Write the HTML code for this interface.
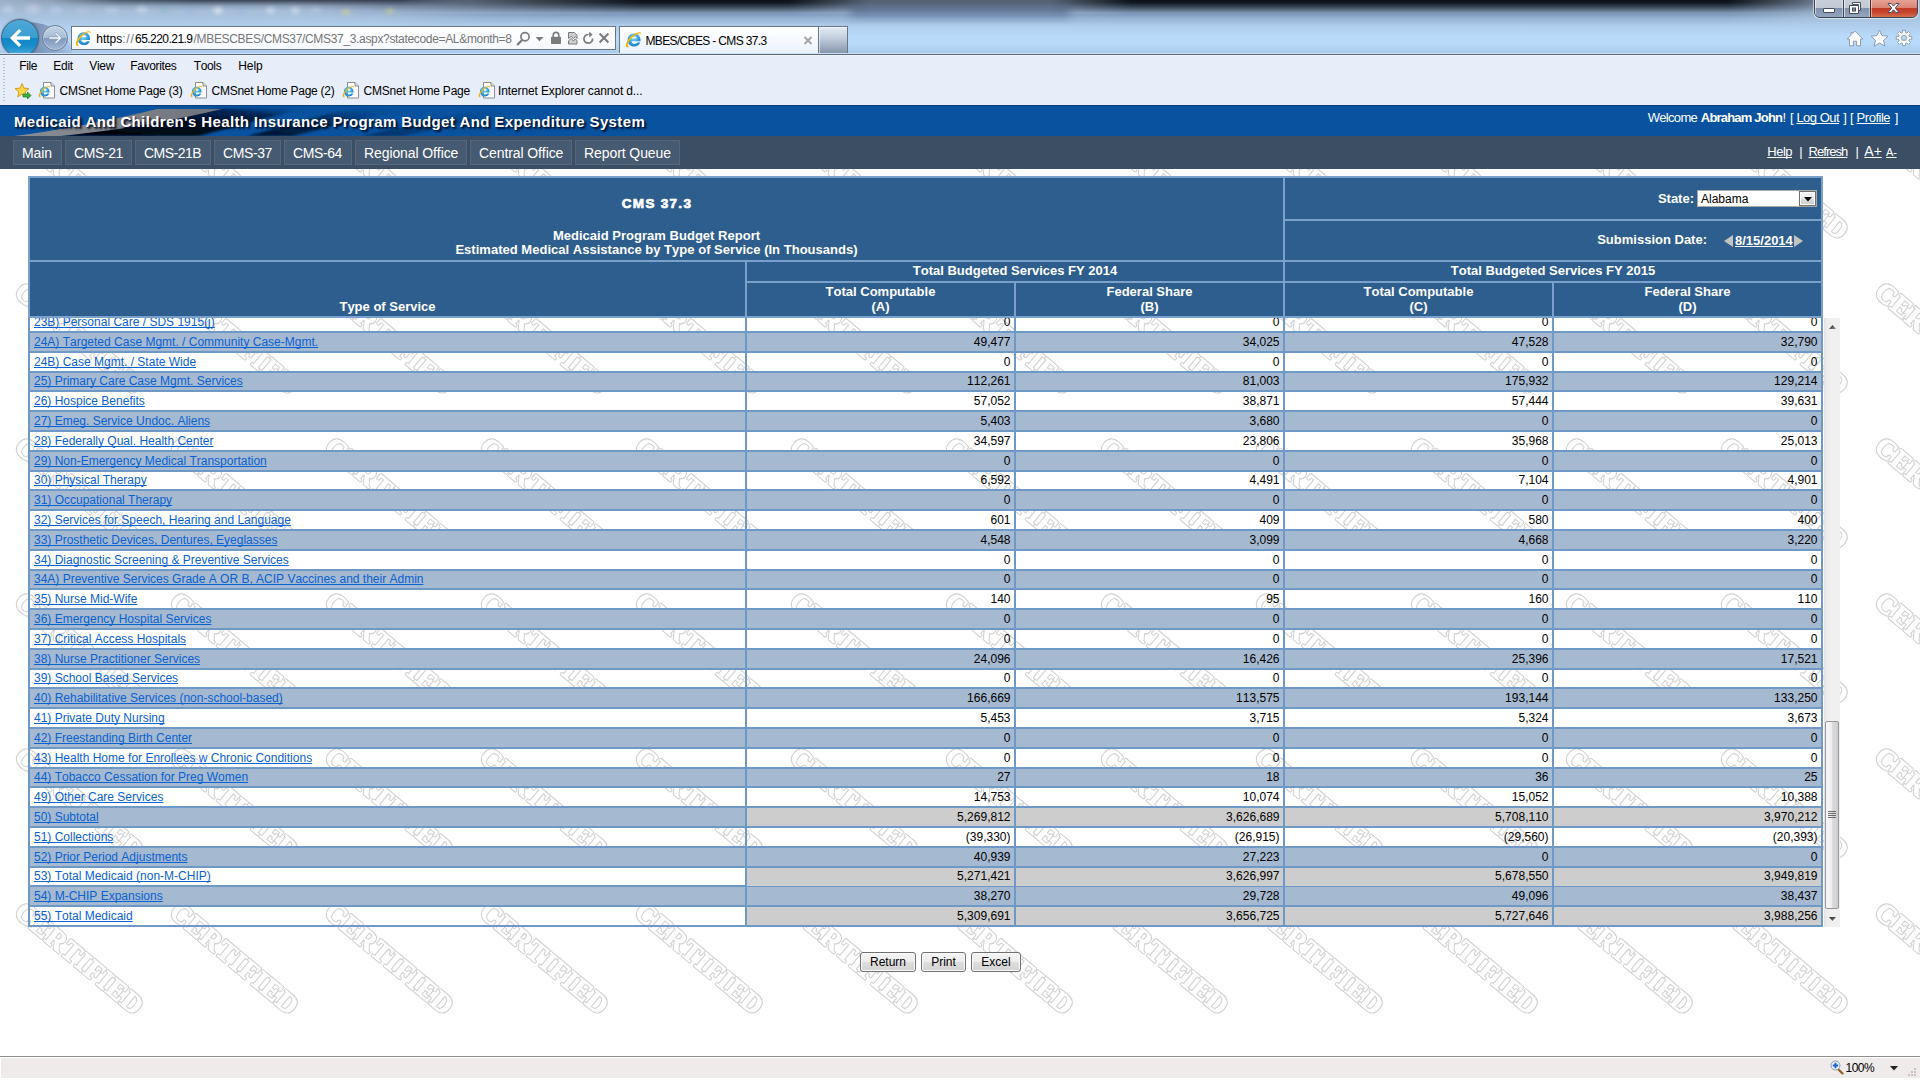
<!DOCTYPE html>
<html><head><meta charset="utf-8"><title>MBES/CBES - CMS 37.3</title>
<style>
*{box-sizing:border-box}
html,body{margin:0;padding:0;width:1920px;height:1080px;overflow:hidden;background:#fff}
body{font-family:"Liberation Sans",sans-serif;font-size:12px;color:#000;position:relative;font-kerning:none}
.abs{position:absolute}
a{text-decoration:underline}
*{text-decoration-skip-ink:none}
svg{display:block}
/* ---------- page ---------- */
#page{position:absolute;left:0;top:0;width:1920px;height:1056px;overflow:hidden;background:#fff}
#wm{position:absolute;left:0;top:105px;width:1920px;height:951px;overflow:hidden}
#hdr{position:absolute;left:0;top:105px;width:1920px;height:31px;background:#08529f;overflow:hidden}
#nav{position:absolute;left:0;top:136px;width:1920px;height:33px;background:#3b4e64}
.nb{position:absolute;top:140px;height:25px;background:#465a71;border:1px solid #53677e}
.hb{position:absolute;background:#2e5e8e}
.bd{position:absolute;background:#79a1cb}
.bd2{position:absolute;background:#6e98c6}
.th{position:absolute;color:#fff;font-weight:bold;font-size:13px;line-height:15px;text-align:center;white-space:nowrap}
#rows{position:absolute;left:30px;top:318px;width:1791px;height:609px;overflow:hidden}
.r{position:absolute;left:0;width:1791px;height:19.8px;border-bottom:2px solid #6e98c6;font-size:12px;line-height:17.5px;white-space:nowrap}
.r.alt{background:#a5b9d0}
.r>div{position:absolute;top:0;height:18px}
.t{position:absolute;left:0;width:1791px;height:18px;font-size:12px;line-height:18px;white-space:nowrap}
.t>div{position:absolute;top:0;height:18px;text-align:right;padding-right:3.5px}
.t .c0{left:0;width:715px;text-align:left;padding-left:4px}
.r .c1,.t .c1{left:717px;width:267px}
.r .c2,.t .c2{left:986px;width:267px}
.r .c3,.t .c3{left:1255px;width:267px}
.r .c4,.t .c4{left:1524px;width:267px}
.r.tot .c1,.r.tot .c2,.r.tot .c3,.r.tot .c4{background:#cdcdcd}
.t a{color:#0a62d0}
.btn{position:absolute;top:952px;height:20px;border:1px solid #707070;border-radius:3px;background:linear-gradient(180deg,#f4f4f4 0,#ececec 48%,#dedede 52%,#d2d2d2 100%);box-shadow:inset 0 0 0 1px #fbfbfb;font-size:12px;line-height:18px;text-align:center;color:#000}
/* ---------- glass / chrome ---------- */
#glass{position:absolute;left:0;top:0;width:1920px;height:53px;overflow:hidden;
 background:linear-gradient(180deg,#9eb1c8 0,#a3b9d3 8px,#a8c2de 16px,#b0cdec 26px,#b9dafa 37px,#b8d8f8 44px,#b0d0f0 50px,#a9c9e9 53px);}
#glass .dk{position:absolute;left:0;top:0;width:1920px;height:28px;
 background:linear-gradient(180deg,rgba(13,17,25,1) 0,rgba(15,21,31,.96) 3px,rgba(28,40,58,.7) 8px,rgba(55,78,108,.34) 13px,rgba(80,110,150,.1) 18px,rgba(80,110,150,0) 24px);
 -webkit-mask-image:linear-gradient(90deg,transparent 0,transparent 300px,rgba(0,0,0,.3) 400px,rgba(0,0,0,.72) 540px,#000 640px,#000 790px,rgba(0,0,0,.5) 870px,rgba(0,0,0,.5) 1050px,#000 1130px,#000 1730px,rgba(0,0,0,.5) 1800px,transparent 1850px);
 mask-image:linear-gradient(90deg,transparent 0,transparent 300px,rgba(0,0,0,.3) 400px,rgba(0,0,0,.72) 540px,#000 640px,#000 790px,rgba(0,0,0,.5) 870px,rgba(0,0,0,.5) 1050px,#000 1130px,#000 1730px,rgba(0,0,0,.5) 1800px,transparent 1850px);}
#sep1{position:absolute;left:0;top:53px;width:1920px;height:3px;background:linear-gradient(180deg,#cfe3f8 0,#cfe3f8 33.3%,#5b687b 33.3%,#5b687b 66.6%,#f0f5fc 66.6%)}
#menubar{position:absolute;left:0;top:56px;width:1920px;height:49px;background:#e7edf9}
</style></head>
<body>
<div id="page">
<div id="wm">
<svg width="1920" height="951" viewBox="0 0 1920 951"><defs><pattern id="wmp" x="0" y="0" width="155" height="155" patternUnits="userSpaceOnUse"><g transform="translate(13,34.500) rotate(40)"><text x="0" y="0" font-family="Liberation Serif" font-weight="bold" font-size="27.5" textLength="158" lengthAdjust="spacing" fill="#d1d1d1" stroke="#d1d1d1" stroke-width="3.000" stroke-linejoin="round">CERTIFIED</text><text x="0" y="0" font-family="Liberation Serif" font-weight="bold" font-size="27.5" textLength="158" lengthAdjust="spacing" fill="#fff" stroke="#fff" stroke-width="0.800" stroke-linejoin="round">CERTIFIED</text></g></pattern></defs><rect width="1920" height="951" fill="url(#wmp)"/></svg>
</div>
<div id="hdr"><svg width="1920" height="31" viewBox="0 0 1920 31"><defs><linearGradient id="hg1" x1="0" y1="0" x2="1" y2="0"><stop offset="0" stop-color="#8a8d93"/><stop offset=".55" stop-color="#7d8087"/><stop offset="1" stop-color="#6d727b"/></linearGradient><linearGradient id="hg2" x1="0" y1="1" x2="1" y2="0"><stop offset="0" stop-color="#010306"/><stop offset=".5" stop-color="#020c1f"/><stop offset=".8" stop-color="#04224f" stop-opacity=".9"/><stop offset="1" stop-color="#08529f" stop-opacity=".1"/></linearGradient><linearGradient id="hg3" x1="0" y1="1" x2="1" y2="0"><stop offset="0" stop-color="#020d22" stop-opacity=".95"/><stop offset=".6" stop-color="#052452" stop-opacity=".7"/><stop offset="1" stop-color="#08529f" stop-opacity="0"/></linearGradient><filter id="hb" x="-5%" y="-50%" width="110%" height="200%"><feGaussianBlur stdDeviation="1.2"/></filter></defs><rect width="1920" height="1" fill="#0b3c74"/><path d="M56 31 L222 3.500 L305 3 L198 31 Z" fill="url(#hg2)" filter="url(#hb)"/><path d="M248 31 L332 8 L368 3.500 L404 4.500 L292 31 Z" fill="url(#hg3)" filter="url(#hb)"/><path d="M362 31 L472 6 L522 6 L402 31 Z" fill="url(#hg3)" opacity=".45" filter="url(#hb)"/><path d="M14 31 C70 24 120 13 157 4 L222 4 C180 14 130 24 60 31z" fill="url(#hg1)"/></svg></div>
<div style="position:absolute;left:14px;top:113px;font-size:15px;line-height:17px;white-space:pre;color:#fff;font-weight:bold;letter-spacing:0.362px;text-shadow:2px 2px 2px rgba(0,10,35,.85),1px 1px 1px rgba(0,10,35,.6);">Medicaid And Children's Health Insurance Program Budget And Expenditure System</div>
<div style="position:absolute;left:1647.7px;top:110px;font-size:13px;line-height:15px;white-space:pre;color:#fff;letter-spacing:-0.678px;">Welcome</div>
<div style="position:absolute;left:1700.8px;top:110px;font-size:13px;line-height:15px;white-space:pre;color:#fff;font-weight:bold;letter-spacing:-0.801px;">Abraham John</div>
<div style="position:absolute;left:1782.6px;top:110px;font-size:13px;line-height:15px;white-space:pre;color:#fff;">!</div>
<div style="position:absolute;left:1789.9px;top:110px;font-size:13px;line-height:15px;white-space:pre;color:#fff;">[</div>
<div style="position:absolute;left:1796.4px;top:110px;font-size:13px;line-height:15px;white-space:pre;color:#fff;letter-spacing:-0.508px;text-decoration:underline;">Log Out</div>
<div style="position:absolute;left:1843.3px;top:110px;font-size:13px;line-height:15px;white-space:pre;color:#fff;">]</div>
<div style="position:absolute;left:1850px;top:110px;font-size:13px;line-height:15px;white-space:pre;color:#fff;">[</div>
<div style="position:absolute;left:1856.6px;top:110px;font-size:13px;line-height:15px;white-space:pre;color:#fff;letter-spacing:-0.478px;text-decoration:underline;">Profile</div>
<div style="position:absolute;left:1894.7px;top:110px;font-size:13px;line-height:15px;white-space:pre;color:#fff;">]</div>
<div id="nav"></div>
<div class="nb" style="left:13px;width:49px"></div>
<div style="position:absolute;left:22px;top:145px;font-size:14px;line-height:16px;white-space:pre;color:#fff;letter-spacing:-0.086px;">Main</div>
<div class="nb" style="left:65px;width:67px"></div>
<div style="position:absolute;left:74px;top:145px;font-size:14px;line-height:16px;white-space:pre;color:#fff;letter-spacing:-0.391px;">CMS-21</div>
<div class="nb" style="left:135px;width:76px"></div>
<div style="position:absolute;left:144px;top:145px;font-size:14px;line-height:16px;white-space:pre;color:#fff;letter-spacing:-0.526px;">CMS-21B</div>
<div class="nb" style="left:214px;width:67px"></div>
<div style="position:absolute;left:223px;top:145px;font-size:14px;line-height:16px;white-space:pre;color:#fff;letter-spacing:-0.391px;">CMS-37</div>
<div class="nb" style="left:284px;width:68px"></div>
<div style="position:absolute;left:293px;top:145px;font-size:14px;line-height:16px;white-space:pre;color:#fff;letter-spacing:-0.391px;">CMS-64</div>
<div class="nb" style="left:355px;width:112px"></div>
<div style="position:absolute;left:364px;top:145px;font-size:14px;line-height:16px;white-space:pre;color:#fff;letter-spacing:-0.098px;">Regional Office</div>
<div class="nb" style="left:470px;width:102px"></div>
<div style="position:absolute;left:479px;top:145px;font-size:14px;line-height:16px;white-space:pre;color:#fff;letter-spacing:-0.095px;">Central Office</div>
<div class="nb" style="left:575px;width:105px"></div>
<div style="position:absolute;left:584px;top:145px;font-size:14px;line-height:16px;white-space:pre;color:#fff;letter-spacing:-0.079px;">Report Queue</div>
<div style="position:absolute;left:1767.3px;top:144px;font-size:13px;line-height:15px;white-space:pre;color:#fff;letter-spacing:-0.509px;text-decoration:underline;">Help</div>
<div style="position:absolute;left:1799.2px;top:144px;font-size:13px;line-height:15px;white-space:pre;color:#fff;">|</div>
<div style="position:absolute;left:1808.5px;top:144px;font-size:13px;line-height:15px;white-space:pre;color:#fff;letter-spacing:-0.946px;text-decoration:underline;">Refresh</div>
<div style="position:absolute;left:1855.5px;top:144px;font-size:13px;line-height:15px;white-space:pre;color:#fff;">|</div>
<div style="position:absolute;left:1864.3px;top:143px;font-size:14px;line-height:16px;white-space:pre;color:#fff;letter-spacing:-0.007px;text-decoration:underline;">A+</div>
<div style="position:absolute;left:1886.1px;top:146px;font-size:11px;line-height:12px;white-space:pre;color:#fff;letter-spacing:-0.250px;text-decoration:underline;">A-</div>
<div class="bd" style="left:28px;top:176px;width:1795px;height:142px"></div>
<div class="bd2" style="left:28px;top:318px;width:2px;height:609px"></div>
<div class="bd2" style="left:1821px;top:318px;width:2px;height:609px"></div>
<div class="hb" style="left:30px;top:178px;width:1253px;height:82px"></div>
<div class="hb" style="left:1285px;top:178px;width:536px;height:41px"></div>
<div class="hb" style="left:1285px;top:221px;width:536px;height:39px"></div>
<div class="hb" style="left:30px;top:262px;width:715px;height:54px"></div>
<div class="hb" style="left:747px;top:262px;width:536px;height:19px"></div>
<div class="hb" style="left:1285px;top:262px;width:536px;height:19px"></div>
<div class="hb" style="left:747px;top:283px;width:267px;height:33px"></div>
<div class="hb" style="left:1016px;top:283px;width:267px;height:33px"></div>
<div class="hb" style="left:1285px;top:283px;width:267px;height:33px"></div>
<div class="hb" style="left:1554px;top:283px;width:267px;height:33px"></div>
<div class="th" style="left:30px;width:1253px;top:196px;font-size:13.5px;letter-spacing:1.3px;padding-left:1px;-webkit-text-stroke:.7px #fff;">CMS 37.3</div>
<div class="th" style="left:30px;width:1253px;top:229px;line-height:14px;letter-spacing:.02px">Medicaid Program Budget Report<br>Estimated Medical Assistance by Type of Service (In Thousands)</div>
<div class="th" style="left:30px;width:715px;top:299px;">Type of Service</div>
<div class="th" style="left:747px;width:536px;top:263px;">Total Budgeted Services FY 2014</div>
<div class="th" style="left:1285px;width:536px;top:263px;">Total Budgeted Services FY 2015</div>
<div class="th" style="left:747px;width:267px;top:284px;">Total Computable<br>(A)</div>
<div class="th" style="left:1016px;width:267px;top:284px;">Federal Share<br>(B)</div>
<div class="th" style="left:1285px;width:267px;top:284px;">Total Computable<br>(C)</div>
<div class="th" style="left:1554px;width:267px;top:284px;">Federal Share<br>(D)</div>
<div class="th" style="left:1600px;width:94px;top:191px;text-align:right">State:</div>
<div class="abs" style="left:1697px;top:190px;width:120px;height:17px;background:#fff;border:1px solid #a9a9a9;font-size:12px;line-height:16px;padding-left:3px">Alabama<div class="abs" style="right:0;top:0;width:17px;height:15px;border:1px solid #707070;background:#fff"><div class="abs" style="left:1px;top:1px;width:13px;height:11px;background:linear-gradient(180deg,#f2f2f2 0,#ebebeb 50%,#dddddd 50%,#cfcfcf 100%)"></div><svg class="abs" style="left:4px;top:4.500px" width="8" height="5" viewBox="0 0 8 5"><path d="M0 0h8L4 4.500z" fill="#000"/></svg></div></div>
<div class="th" style="left:1500px;width:207px;top:232px;text-align:right">Submission Date:</div>
<svg class="abs" style="left:1724px;top:235px" width="9" height="12" viewBox="0 0 9 12"><path d="M9 0v12L0 6z" fill="#c3c3c3"/></svg>
<div class="th" style="left:1735px;top:233px;text-align:left;text-decoration:underline">8/15/2014</div>
<svg class="abs" style="left:1794px;top:235px" width="9" height="12" viewBox="0 0 9 12"><path d="M0 0v12L9 6z" fill="#c3c3c3"/></svg>
<div id="rows">
<div class="r" style="top:-4.80px"><div class="c1"></div><div class="c2"></div><div class="c3"></div><div class="c4"></div></div>
<div class="t" style="top:-5px"><div class="c0"><a>23B) Personal Care / SDS 1915(j)</a></div><div class="c1">0</div><div class="c2">0</div><div class="c3">0</div><div class="c4">0</div></div>
<div class="r alt" style="top:15.00px"><div class="c1"></div><div class="c2"></div><div class="c3"></div><div class="c4"></div></div>
<div class="t" style="top:15px"><div class="c0"><a>24A) Targeted Case Mgmt. / Community Case-Mgmt.</a></div><div class="c1">49,477</div><div class="c2">34,025</div><div class="c3">47,528</div><div class="c4">32,790</div></div>
<div class="r" style="top:34.80px"><div class="c1"></div><div class="c2"></div><div class="c3"></div><div class="c4"></div></div>
<div class="t" style="top:35px"><div class="c0"><a>24B) Case Mgmt. / State Wide</a></div><div class="c1">0</div><div class="c2">0</div><div class="c3">0</div><div class="c4">0</div></div>
<div class="r alt" style="top:54.60px"><div class="c1"></div><div class="c2"></div><div class="c3"></div><div class="c4"></div></div>
<div class="t" style="top:54px"><div class="c0"><a>25) Primary Care Case Mgmt. Services</a></div><div class="c1">112,261</div><div class="c2">81,003</div><div class="c3">175,932</div><div class="c4">129,214</div></div>
<div class="r" style="top:74.40px"><div class="c1"></div><div class="c2"></div><div class="c3"></div><div class="c4"></div></div>
<div class="t" style="top:74px"><div class="c0"><a>26) Hospice Benefits</a></div><div class="c1">57,052</div><div class="c2">38,871</div><div class="c3">57,444</div><div class="c4">39,631</div></div>
<div class="r alt" style="top:94.20px"><div class="c1"></div><div class="c2"></div><div class="c3"></div><div class="c4"></div></div>
<div class="t" style="top:94px"><div class="c0"><a>27) Emeg. Service Undoc. Aliens</a></div><div class="c1">5,403</div><div class="c2">3,680</div><div class="c3">0</div><div class="c4">0</div></div>
<div class="r" style="top:114.00px"><div class="c1"></div><div class="c2"></div><div class="c3"></div><div class="c4"></div></div>
<div class="t" style="top:114px"><div class="c0"><a>28) Federally Qual. Health Center</a></div><div class="c1">34,597</div><div class="c2">23,806</div><div class="c3">35,968</div><div class="c4">25,013</div></div>
<div class="r alt" style="top:133.80px"><div class="c1"></div><div class="c2"></div><div class="c3"></div><div class="c4"></div></div>
<div class="t" style="top:134px"><div class="c0"><a>29) Non-Emergency Medical Transportation</a></div><div class="c1">0</div><div class="c2">0</div><div class="c3">0</div><div class="c4">0</div></div>
<div class="r" style="top:153.60px"><div class="c1"></div><div class="c2"></div><div class="c3"></div><div class="c4"></div></div>
<div class="t" style="top:153px"><div class="c0"><a>30) Physical Therapy</a></div><div class="c1">6,592</div><div class="c2">4,491</div><div class="c3">7,104</div><div class="c4">4,901</div></div>
<div class="r alt" style="top:173.40px"><div class="c1"></div><div class="c2"></div><div class="c3"></div><div class="c4"></div></div>
<div class="t" style="top:173px"><div class="c0"><a>31) Occupational Therapy</a></div><div class="c1">0</div><div class="c2">0</div><div class="c3">0</div><div class="c4">0</div></div>
<div class="r" style="top:193.20px"><div class="c1"></div><div class="c2"></div><div class="c3"></div><div class="c4"></div></div>
<div class="t" style="top:193px"><div class="c0"><a>32) Services for Speech, Hearing and Language</a></div><div class="c1">601</div><div class="c2">409</div><div class="c3">580</div><div class="c4">400</div></div>
<div class="r alt" style="top:213.00px"><div class="c1"></div><div class="c2"></div><div class="c3"></div><div class="c4"></div></div>
<div class="t" style="top:213px"><div class="c0"><a>33) Prosthetic Devices, Dentures, Eyeglasses</a></div><div class="c1">4,548</div><div class="c2">3,099</div><div class="c3">4,668</div><div class="c4">3,220</div></div>
<div class="r" style="top:232.80px"><div class="c1"></div><div class="c2"></div><div class="c3"></div><div class="c4"></div></div>
<div class="t" style="top:233px"><div class="c0"><a>34) Diagnostic Screening &amp; Preventive Services</a></div><div class="c1">0</div><div class="c2">0</div><div class="c3">0</div><div class="c4">0</div></div>
<div class="r alt" style="top:252.60px"><div class="c1"></div><div class="c2"></div><div class="c3"></div><div class="c4"></div></div>
<div class="t" style="top:252px"><div class="c0"><a>34A) Preventive Services Grade A OR B, ACIP Vaccines and their Admin</a></div><div class="c1">0</div><div class="c2">0</div><div class="c3">0</div><div class="c4">0</div></div>
<div class="r" style="top:272.40px"><div class="c1"></div><div class="c2"></div><div class="c3"></div><div class="c4"></div></div>
<div class="t" style="top:272px"><div class="c0"><a>35) Nurse Mid-Wife</a></div><div class="c1">140</div><div class="c2">95</div><div class="c3">160</div><div class="c4">110</div></div>
<div class="r alt" style="top:292.20px"><div class="c1"></div><div class="c2"></div><div class="c3"></div><div class="c4"></div></div>
<div class="t" style="top:292px"><div class="c0"><a>36) Emergency Hospital Services</a></div><div class="c1">0</div><div class="c2">0</div><div class="c3">0</div><div class="c4">0</div></div>
<div class="r" style="top:312.00px"><div class="c1"></div><div class="c2"></div><div class="c3"></div><div class="c4"></div></div>
<div class="t" style="top:312px"><div class="c0"><a>37) Critical Access Hospitals</a></div><div class="c1">0</div><div class="c2">0</div><div class="c3">0</div><div class="c4">0</div></div>
<div class="r alt" style="top:331.80px"><div class="c1"></div><div class="c2"></div><div class="c3"></div><div class="c4"></div></div>
<div class="t" style="top:332px"><div class="c0"><a>38) Nurse Practitioner Services</a></div><div class="c1">24,096</div><div class="c2">16,426</div><div class="c3">25,396</div><div class="c4">17,521</div></div>
<div class="r" style="top:351.60px"><div class="c1"></div><div class="c2"></div><div class="c3"></div><div class="c4"></div></div>
<div class="t" style="top:351px"><div class="c0"><a>39) School Based Services</a></div><div class="c1">0</div><div class="c2">0</div><div class="c3">0</div><div class="c4">0</div></div>
<div class="r alt" style="top:371.40px"><div class="c1"></div><div class="c2"></div><div class="c3"></div><div class="c4"></div></div>
<div class="t" style="top:371px"><div class="c0"><a>40) Rehabilitative Services (non-school-based)</a></div><div class="c1">166,669</div><div class="c2">113,575</div><div class="c3">193,144</div><div class="c4">133,250</div></div>
<div class="r" style="top:391.20px"><div class="c1"></div><div class="c2"></div><div class="c3"></div><div class="c4"></div></div>
<div class="t" style="top:391px"><div class="c0"><a>41) Private Duty Nursing</a></div><div class="c1">5,453</div><div class="c2">3,715</div><div class="c3">5,324</div><div class="c4">3,673</div></div>
<div class="r alt" style="top:411.00px"><div class="c1"></div><div class="c2"></div><div class="c3"></div><div class="c4"></div></div>
<div class="t" style="top:411px"><div class="c0"><a>42) Freestanding Birth Center</a></div><div class="c1">0</div><div class="c2">0</div><div class="c3">0</div><div class="c4">0</div></div>
<div class="r" style="top:430.80px"><div class="c1"></div><div class="c2"></div><div class="c3"></div><div class="c4"></div></div>
<div class="t" style="top:431px"><div class="c0"><a>43) Health Home for Enrollees w Chronic Conditions</a></div><div class="c1">0</div><div class="c2">0</div><div class="c3">0</div><div class="c4">0</div></div>
<div class="r alt" style="top:450.60px"><div class="c1"></div><div class="c2"></div><div class="c3"></div><div class="c4"></div></div>
<div class="t" style="top:450px"><div class="c0"><a>44) Tobacco Cessation for Preg Women</a></div><div class="c1">27</div><div class="c2">18</div><div class="c3">36</div><div class="c4">25</div></div>
<div class="r" style="top:470.40px"><div class="c1"></div><div class="c2"></div><div class="c3"></div><div class="c4"></div></div>
<div class="t" style="top:470px"><div class="c0"><a>49) Other Care Services</a></div><div class="c1">14,753</div><div class="c2">10,074</div><div class="c3">15,052</div><div class="c4">10,388</div></div>
<div class="r alt tot" style="top:490.20px"><div class="c1"></div><div class="c2"></div><div class="c3"></div><div class="c4"></div></div>
<div class="t" style="top:490px"><div class="c0"><a>50) Subtotal</a></div><div class="c1">5,269,812</div><div class="c2">3,626,689</div><div class="c3">5,708,110</div><div class="c4">3,970,212</div></div>
<div class="r" style="top:510.00px"><div class="c1"></div><div class="c2"></div><div class="c3"></div><div class="c4"></div></div>
<div class="t" style="top:510px"><div class="c0"><a>51) Collections</a></div><div class="c1">(39,330)</div><div class="c2">(26,915)</div><div class="c3">(29,560)</div><div class="c4">(20,393)</div></div>
<div class="r alt" style="top:529.80px"><div class="c1"></div><div class="c2"></div><div class="c3"></div><div class="c4"></div></div>
<div class="t" style="top:530px"><div class="c0"><a>52) Prior Period Adjustments</a></div><div class="c1">40,939</div><div class="c2">27,223</div><div class="c3">0</div><div class="c4">0</div></div>
<div class="r tot" style="top:549.60px"><div class="c1"></div><div class="c2"></div><div class="c3"></div><div class="c4"></div></div>
<div class="t" style="top:549px"><div class="c0"><a>53) Total Medicaid (non-M-CHIP)</a></div><div class="c1">5,271,421</div><div class="c2">3,626,997</div><div class="c3">5,678,550</div><div class="c4">3,949,819</div></div>
<div class="r alt" style="top:569.40px"><div class="c1"></div><div class="c2"></div><div class="c3"></div><div class="c4"></div></div>
<div class="t" style="top:569px"><div class="c0"><a>54) M-CHIP Expansions</a></div><div class="c1">38,270</div><div class="c2">29,728</div><div class="c3">49,096</div><div class="c4">38,437</div></div>
<div class="r tot" style="top:589.20px"><div class="c1"></div><div class="c2"></div><div class="c3"></div><div class="c4"></div></div>
<div class="t" style="top:589px"><div class="c0"><a>55) Total Medicaid</a></div><div class="c1">5,309,691</div><div class="c2">3,656,725</div><div class="c3">5,727,646</div><div class="c4">3,988,256</div></div>
</div>
<div class="bd2" style="left:745px;top:318px;width:2px;height:609px"></div>
<div class="bd2" style="left:1014px;top:318px;width:2px;height:609px"></div>
<div class="bd2" style="left:1283px;top:318px;width:2px;height:609px"></div>
<div class="bd2" style="left:1552px;top:318px;width:2px;height:609px"></div>
<div class="abs" style="left:1824px;top:318px;width:16px;height:609px;background:linear-gradient(90deg,#e2e2e2 0,#ededed 3px,#f0f0f0 8px,#f0f0f0 100%)"></div>
<svg class="abs" style="left:1829px;top:325px" width="7" height="4" viewBox="0 0 7 4"><defs><linearGradient id="ag1" x1="0" y1="0" x2="1" y2="1"><stop offset="0" stop-color="#222"/><stop offset="1" stop-color="#8a8a8a"/></linearGradient></defs><path d="M0 4L3.500 0 7 4z" fill="url(#ag1)"/></svg>
<svg class="abs" style="left:1829px;top:917px" width="7" height="4" viewBox="0 0 7 4"><defs><linearGradient id="ag2" x1="0" y1="0" x2="1" y2="1"><stop offset="0" stop-color="#222"/><stop offset="1" stop-color="#8a8a8a"/></linearGradient></defs><path d="M0 0h7L3.500 4z" fill="url(#ag2)"/></svg>
<div class="abs" style="left:1825px;top:721px;width:14px;height:188px;border:1px solid #979797;border-radius:2px;background:linear-gradient(90deg,#f6f6f6 0,#f0f0f0 45%,#dcdcdf 50%,#cfcfd3 100%)"></div>
<div class="abs" style="left:1828px;top:811px;width:8px;height:1px;background:#6a6a6a"></div>
<div class="abs" style="left:1828px;top:813px;width:8px;height:1px;background:#6a6a6a"></div>
<div class="abs" style="left:1828px;top:815px;width:8px;height:1px;background:#6a6a6a"></div>
<div class="abs" style="left:1828px;top:817px;width:8px;height:1px;background:#6a6a6a"></div>
<div class="btn" style="left:860px;width:56px">Return</div>
<div class="btn" style="left:921px;width:45px">Print</div>
<div class="btn" style="left:971px;width:50px">Excel</div>
</div>
<div id="glass"><div class="dk"></div><div style="position:absolute;left:0;top:0;width:420px;height:26px;filter:blur(2.2px)"><div style="position:absolute;left:2px;top:6px;width:12px;height:7px;border-radius:50%;background:rgba(210,228,250,0.45)"></div><div style="position:absolute;left:25px;top:4px;width:16px;height:10px;border-radius:50%;background:rgba(215,215,240,0.4)"></div><div style="position:absolute;left:50px;top:6px;width:12px;height:8px;border-radius:50%;background:rgba(200,222,250,0.4)"></div><div style="position:absolute;left:75px;top:7px;width:14px;height:8px;border-radius:50%;background:rgba(190,200,225,0.4)"></div><div style="position:absolute;left:104px;top:6px;width:16px;height:8px;border-radius:50%;background:rgba(205,220,240,0.35)"></div><div style="position:absolute;left:136px;top:5px;width:12px;height:8px;border-radius:50%;background:rgba(225,235,250,0.45)"></div><div style="position:absolute;left:161px;top:6px;width:8px;height:7px;border-radius:50%;background:rgba(120,190,190,0.4)"></div><div style="position:absolute;left:185px;top:6px;width:10px;height:8px;border-radius:50%;background:rgba(150,180,225,0.4)"></div><div style="position:absolute;left:213px;top:6px;width:10px;height:8px;border-radius:50%;background:rgba(235,242,252,0.6)"></div><div style="position:absolute;left:237px;top:6px;width:10px;height:7px;border-radius:50%;background:rgba(150,180,225,0.35)"></div><div style="position:absolute;left:266px;top:6px;width:9px;height:8px;border-radius:50%;background:rgba(225,235,250,0.5)"></div><div style="position:absolute;left:291px;top:6px;width:8px;height:8px;border-radius:50%;background:rgba(225,235,250,0.5)"></div><div style="position:absolute;left:311px;top:6px;width:10px;height:7px;border-radius:50%;background:rgba(200,215,240,0.35)"></div><div style="position:absolute;left:341px;top:9px;width:10px;height:6px;border-radius:50%;background:rgba(225,215,140,0.5)"></div><div style="position:absolute;left:362px;top:8px;width:9px;height:7px;border-radius:50%;background:rgba(150,175,230,0.4)"></div><div style="position:absolute;left:386px;top:8px;width:8px;height:6px;border-radius:50%;background:rgba(225,215,140,0.5)"></div></div><div style="position:absolute;left:0;top:0;width:470px;height:11px;background:linear-gradient(180deg,rgba(45,55,72,.9) 0,rgba(60,74,95,.62) 3px,rgba(80,100,130,.25) 6px,rgba(80,100,130,0) 10px);-webkit-mask-image:linear-gradient(90deg,transparent 0,rgba(0,0,0,.15) 50px,rgba(0,0,0,.8) 120px,#000 200px,#000 400px,transparent 470px)"></div><div style="position:absolute;left:850px;top:4px;width:220px;height:13px;background:rgba(70,92,125,.55);filter:blur(4px)"></div><div style="position:absolute;left:380px;top:14px;width:1440px;height:12px;background:linear-gradient(180deg,rgba(95,130,180,.28),rgba(95,130,180,0));-webkit-mask-image:linear-gradient(90deg,transparent 0,#000 120px,#000 1340px,transparent 1440px)"></div></div>
<div id="sep1"></div>
<div id="menubar"></div>
<div class="abs" style="left:1814px;top:-3px;width:104px;height:21px;border:1px solid #3a4250;border-radius:0 0 6px 6px;box-shadow:0 0 0 1px rgba(255,255,255,.55);overflow:hidden;background:#8a9cb5"><div class="abs" style="left:0;top:0;width:28px;height:20px;background:linear-gradient(180deg,#c9d0da 0,#c1c9d5 49%,#7f91ab 52%,#97a9c2 100%);box-shadow:inset 1px 0 0 rgba(255,255,255,.6),inset -1px -1px 0 rgba(255,255,255,.45)"></div><div class="abs" style="left:28px;top:0;width:1px;height:20px;background:#3a4250"></div><div class="abs" style="left:29px;top:0;width:26px;height:20px;background:linear-gradient(180deg,#c9d0da 0,#c1c9d5 49%,#7f91ab 52%,#97a9c2 100%);box-shadow:inset 1px 0 0 rgba(255,255,255,.6),inset -1px -1px 0 rgba(255,255,255,.45)"></div><div class="abs" style="left:55px;top:0;width:1px;height:20px;background:#4a1d16"></div><div class="abs" style="left:56px;top:0;width:47px;height:20px;background:linear-gradient(180deg,#e9aa9e 0,#d98475 49%,#c03a25 52%,#c9482f 75%,#d77a5a 100%);box-shadow:inset 1px 0 0 rgba(255,255,255,.5),inset -1px -1px 0 rgba(255,255,255,.35)"></div></div>
<div class="abs" style="left:1823px;top:8px;width:12px;height:5px;background:#fff;border:1px solid #454d5c;border-radius:1px"></div>
<svg class="abs" style="left:1848px;top:1px" width="15" height="14" viewBox="0 0 15 14"><path d="M4.500 1.500h8v8h-2v-6h-6z" fill="#fff" stroke="#454d5c"/><path d="M1.500 4.500h9v8h-9z" fill="#fff" stroke="#454d5c"/><rect x="4.500" y="7" width="3" height="3" fill="#8897ad" stroke="#454d5c"/></svg>
<svg class="abs" style="left:1886px;top:2px" width="15" height="12" viewBox="0 0 15 12"><path d="M2 1.500h3.200l2.300 2.600 2.300-2.600H13L9.300 6l3.700 4.500H9.800L7.500 7.800 5.200 10.500H2L5.700 6z" fill="#fff" stroke="#4a4f63" stroke-width="1" stroke-linejoin="round"/></svg>
<div class="abs" style="left:0;top:0;width:120px;height:53px;overflow:hidden"><div class="abs" style="left:22px;top:22px;width:50px;height:31px;border-radius:0 60px 0 0 / 0 40px 0 0;background:linear-gradient(90deg,rgba(70,92,130,.7),rgba(110,135,175,.15))"></div><div class="abs" style="left:1px;top:19px;width:38px;height:38px;border-radius:50%;border:1px solid #44627f;background:linear-gradient(180deg,#4fa9d8 0,#3a9dd2 49%,#0f86c8 51%,#1b8fcd 75%,#55b2dc 100%);box-shadow:0 0 2px rgba(40,60,90,.7)"></div><svg class="abs" style="left:8px;top:27px" width="24" height="22" viewBox="0 0 24 22"><path d="M2 11L11 2l2.300 2.300L8.400 9.200H22v3.600H8.400l4.900 4.900L11 20z" fill="#fff"/></svg><div class="abs" style="left:42px;top:25px;width:26px;height:26px;border-radius:50%;border:1px solid #6a7d96;background:linear-gradient(180deg,#c4d3e6 0,#a9bdd8 49%,#7f98bb 51%,#a3b9d6 100%);box-shadow:inset 0 0 0 1px rgba(255,255,255,.35)"></div><svg class="abs" style="left:48px;top:31px" width="15" height="14" viewBox="0 0 15 14"><path d="M14 7L8 1 6.600 2.500 9.800 5.700H1v2.600h8.800L6.600 11.500 8 13z" fill="#e4ebf4" stroke="#7d8fa8" stroke-width=".6"/></svg></div>
<div class="abs" style="left:71px;top:26px;width:545px;height:24px;border:1px solid #6d7581;background:linear-gradient(180deg,#fff 0,#f6f9fc 100%)"></div>
<svg class="abs" style="left:74.5px;top:29.5px" width="17" height="17" viewBox="0 0 16 16"><defs><radialGradient id="iega" cx=".45" cy=".35" r=".75"><stop offset="0" stop-color="#7fd6fb"/><stop offset=".55" stop-color="#2f9fe0"/><stop offset="1" stop-color="#1a6fbd"/></radialGradient></defs><path d="M8.3 2.2c3.3 0 5.9 2.6 5.9 6.1 0 .4 0 .7-.1 1H5.900c.2 1.500 1.300 2.400 2.800 2.400 1.100 0 1.900-.4 2.500-1.200h2.700c-.9 2.300-2.900 3.700-5.500 3.700-3.400 0-6-2.600-6-6s2.600-6 5.900-6zm0 2.500c-1.300 0-2.200.8-2.400 2.100h4.900c-.200-1.300-1.200-2.100-2.500-2.100z" fill="url(#iega)"/><path d="M1.300 14.600c-1.300-1.600.200-5.600 3.600-8.900C8.200 2.400 12.200.7 14.100 1.300c.6.300.8.900.6 1.800-.300-.800-.9-1.100-1.900-.900-2 .4-4.800 2.200-7 4.700-2.400 2.700-3.700 5.500-3.100 6.900.2.500.6.700 1.200.700-1.100.6-2.100.600-2.600.100z" fill="#f5b400"/></svg>
<div style="position:absolute;left:96.3px;top:32px;font-size:12px;line-height:14px;white-space:pre;color:#000;letter-spacing:-0.043px;">https</div>
<div style="position:absolute;left:122.3px;top:32px;font-size:12px;line-height:14px;white-space:pre;color:#767676;letter-spacing:0.733px;">://</div>
<div style="position:absolute;left:135px;top:32px;font-size:12px;line-height:14px;white-space:pre;color:#000;letter-spacing:-0.536px;">65.220.21.9</div>
<div style="position:absolute;left:193.6px;top:32px;font-size:12px;line-height:14px;white-space:pre;color:#767676;letter-spacing:-0.330px;">/MBESCBES/CMS37/CMS37_3.aspx?statecode=AL&amp;month=8</div>
<svg class="abs" style="left:516px;top:31px" width="16" height="15" viewBox="0 0 16 15"><circle cx="9" cy="5.800" r="4.100" fill="none" stroke="#7b7b7b" stroke-width="1.700"/><path d="M6 9L1.700 13.400" stroke="#7b7b7b" stroke-width="2.200" stroke-linecap="round"/></svg>
<svg class="abs" style="left:535px;top:37px" width="9" height="5" viewBox="0 0 9 5"><path d="M.5 0h8L4.500 4.200z" fill="#7b7b7b"/></svg>
<svg class="abs" style="left:550px;top:31px" width="12" height="14" viewBox="0 0 12 14"><path d="M3.200 6V4.200a2.800 2.800 0 015.600 0V6" fill="none" stroke="#7b7b7b" stroke-width="1.600"/><rect x="1" y="5.800" width="10" height="7.200" rx=".8" fill="#7b7b7b"/></svg>
<svg class="abs" style="left:567px;top:31px" width="12" height="14" viewBox="0 0 12 14"><path d="M1.500 1.500h5.800l2.700 2.700v3.300l-1.600-2-2 2.200-2.100-2.500-2.800 2.300z" fill="#cfcfcf" stroke="#7b7b7b" stroke-width="1" stroke-linejoin="miter"/><path d="M1.500 13h8.500V9.800l-1.600-2-2 2.200-2.100-2.500-2.800 2.300z" fill="#cfcfcf" stroke="#7b7b7b" stroke-width="1"/></svg>
<svg class="abs" style="left:582px;top:31px" width="13" height="14" viewBox="0 0 13 14"><path d="M10.600 7.500A4.350 4.350 0 116.600 3.500" fill="none" stroke="#7b7b7b" stroke-width="1.700"/><path d="M7.200 .5l3.400 3.100-3.400 3z" fill="#7b7b7b"/></svg>
<svg class="abs" style="left:598px;top:32px" width="12" height="12" viewBox="0 0 12 12"><path d="M1.600 1.600l8.800 8.800M10.400 1.600l-8.800 8.800" stroke="#7b7b7b" stroke-width="2.100"/></svg>
<div class="abs" style="left:619px;top:26px;width:200px;height:27px;border:1px solid #6b7585;border-bottom:none;background:linear-gradient(180deg,#ffffff 0,#f8fbfe 40%,#e8f2fc 100%)"></div>
<svg class="abs" style="left:624.5px;top:31px" width="17.5" height="17.5" viewBox="0 0 16 16"><defs><radialGradient id="iegb" cx=".45" cy=".35" r=".75"><stop offset="0" stop-color="#7fd6fb"/><stop offset=".55" stop-color="#2f9fe0"/><stop offset="1" stop-color="#1a6fbd"/></radialGradient></defs><path d="M8.3 2.2c3.3 0 5.9 2.6 5.9 6.1 0 .4 0 .7-.1 1H5.900c.2 1.500 1.300 2.400 2.800 2.400 1.100 0 1.900-.4 2.500-1.200h2.700c-.9 2.300-2.900 3.700-5.500 3.700-3.400 0-6-2.600-6-6s2.600-6 5.900-6zm0 2.500c-1.300 0-2.200.8-2.400 2.100h4.900c-.200-1.300-1.200-2.100-2.500-2.100z" fill="url(#iegb)"/><path d="M1.300 14.600c-1.300-1.600.200-5.600 3.600-8.900C8.200 2.400 12.200.7 14.100 1.300c.6.300.8.900.6 1.800-.300-.800-.9-1.100-1.900-.900-2 .4-4.800 2.200-7 4.700-2.400 2.700-3.700 5.500-3.100 6.900.2.500.6.700 1.200.700-1.100.6-2.100.600-2.600.100z" fill="#f5b400"/></svg>
<div style="position:absolute;left:645.5px;top:34px;font-size:12px;line-height:14px;white-space:pre;color:#000;letter-spacing:-0.652px;">MBES/CBES - CMS 37.3</div>
<svg class="abs" style="left:803px;top:36px" width="10" height="9" viewBox="0 0 10 9"><path d="M1.500 1l7 7M8.500 1l-7 7" stroke="#a3a3a3" stroke-width="1.800"/></svg>
<div class="abs" style="left:818px;top:26px;width:30px;height:27px;border:1px solid #6b7585;border-bottom:none;background:linear-gradient(180deg,#e3ecf7 0,#c4d0df 40%,#8696aa 100%);box-shadow:inset 1px 1px 0 rgba(255,255,255,.5)"></div>
<svg class="abs" style="left:1846px;top:30px" width="18" height="17" viewBox="0 0 18 17"><path d="M9 1.200L16.800 9h-2.300v6.800h-3.900v-4.600H7.400v4.600H3.500V9H1.200L5 5.200V2.500h1.800v1z" fill="#fff" stroke="#8494ab" stroke-width=".9" stroke-linejoin="round"/></svg>
<svg class="abs" style="left:1870px;top:29px" width="19" height="18" viewBox="0 0 19 18"><path d="M9.500 1l2.500 5.600 6 .6-4.500 4 1.300 5.900-5.300-3.100-5.300 3.100 1.300-5.900-4.500-4 6-.6z" fill="#fff" stroke="#8494ab" stroke-width=".9" stroke-linejoin="round"/></svg>
<svg class="abs" style="left:1895px;top:29px" width="18" height="18" viewBox="0 0 18 18"><path d="M16.78 7.64 L16.78 10.36 L14.52 10.42 L13.91 11.90 L15.46 13.54 L13.54 15.46 L11.90 13.91 L10.42 14.52 L10.36 16.78 L7.64 16.78 L7.58 14.52 L6.10 13.91 L4.46 15.46 L2.54 13.54 L4.09 11.90 L3.48 10.42 L1.22 10.36 L1.22 7.64 L3.48 7.58 L4.09 6.10 L2.54 4.46 L4.46 2.54 L6.10 4.09 L7.58 3.48 L7.64 1.22 L10.36 1.22 L10.42 3.48 L11.90 4.09 L13.54 2.54 L15.46 4.46 L13.91 6.10 L14.52 7.58z M11.50 9.00 A2.5 2.5 0 1 0 6.50 9.00 A2.5 2.5 0 1 0 11.50 9.00z" fill="#fff" stroke="#8494ab" stroke-width=".9" stroke-linejoin="round" fill-rule="evenodd"/></svg>
<div class="abs" style="left:3px;top:58px;width:2px;height:44px;background:repeating-linear-gradient(180deg,#b8c2d2 0,#b8c2d2 1px,transparent 1px,transparent 3px)"></div>
<div style="position:absolute;left:19.3px;top:59px;font-size:12px;line-height:14px;white-space:pre;color:#000;letter-spacing:-0.409px;">File</div>
<div style="position:absolute;left:53.3px;top:59px;font-size:12px;line-height:14px;white-space:pre;color:#000;letter-spacing:-0.294px;">Edit</div>
<div style="position:absolute;left:89.3px;top:59px;font-size:12px;line-height:14px;white-space:pre;color:#000;letter-spacing:-0.323px;">View</div>
<div style="position:absolute;left:130.3px;top:59px;font-size:12px;line-height:14px;white-space:pre;color:#000;letter-spacing:-0.350px;">Favorites</div>
<div style="position:absolute;left:193.7px;top:59px;font-size:12px;line-height:14px;white-space:pre;color:#000;letter-spacing:-0.343px;">Tools</div>
<div style="position:absolute;left:238.3px;top:59px;font-size:12px;line-height:14px;white-space:pre;color:#000;letter-spacing:-0.120px;">Help</div>
<svg class="abs" style="left:14px;top:82px" width="18" height="18" viewBox="0 0 18 18"><path d="M8 1.500l2 4.600 5 .5-3.800 3.300 1.100 4.900L8 12.200l-4.300 2.600 1.100-4.900L1 6.600l5-.5z" fill="#f9d648" stroke="#c99a17" stroke-width=".9" stroke-linejoin="round"/><path d="M9 12h4.500V10l3.500 3.500-3.500 3.500v-2H9z" fill="#3fae3a" stroke="#1f7a1f" stroke-width=".7" stroke-linejoin="round"/></svg>
<svg class="abs" style="left:39px;top:82px" width="17" height="17" viewBox="0 0 17 17"><path d="M4.500 .5h7.500l3.500 3.500v12h-11z" fill="#fdfdfd" stroke="#8c8c8c" stroke-width="1"/><path d="M12 .5v3.500h3.500" fill="#e4e4e4" stroke="#8c8c8c" stroke-width="1"/></svg><svg class="abs" style="left:38px;top:85px" width="13" height="13" viewBox="0 0 16 16"><defs><radialGradient id="iegc" cx=".45" cy=".35" r=".75"><stop offset="0" stop-color="#7fd6fb"/><stop offset=".55" stop-color="#2f9fe0"/><stop offset="1" stop-color="#1a6fbd"/></radialGradient></defs><path d="M8.3 2.2c3.3 0 5.9 2.6 5.9 6.1 0 .4 0 .7-.1 1H5.900c.2 1.500 1.300 2.400 2.800 2.400 1.100 0 1.900-.4 2.500-1.200h2.700c-.9 2.300-2.900 3.700-5.500 3.700-3.400 0-6-2.600-6-6s2.600-6 5.900-6zm0 2.500c-1.300 0-2.200.8-2.400 2.100h4.900c-.200-1.300-1.200-2.100-2.500-2.100z" fill="url(#iegc)"/><path d="M1.300 14.600c-1.300-1.600.200-5.600 3.600-8.900C8.200 2.400 12.200.7 14.100 1.300c.6.300.8.900.6 1.800-.300-.800-.9-1.100-1.900-.900-2 .4-4.800 2.200-7 4.700-2.400 2.700-3.700 5.500-3.100 6.900.2.500.6.700 1.200.700-1.100.6-2.100.600-2.600.100z" fill="#f5b400"/></svg>
<div style="position:absolute;left:59.5px;top:84px;font-size:12px;line-height:14px;white-space:pre;color:#000;letter-spacing:-0.253px;">CMSnet Home Page (3)</div>
<svg class="abs" style="left:191px;top:82px" width="17" height="17" viewBox="0 0 17 17"><path d="M4.500 .5h7.500l3.500 3.500v12h-11z" fill="#fdfdfd" stroke="#8c8c8c" stroke-width="1"/><path d="M12 .5v3.500h3.500" fill="#e4e4e4" stroke="#8c8c8c" stroke-width="1"/></svg><svg class="abs" style="left:190px;top:85px" width="13" height="13" viewBox="0 0 16 16"><defs><radialGradient id="iegd" cx=".45" cy=".35" r=".75"><stop offset="0" stop-color="#7fd6fb"/><stop offset=".55" stop-color="#2f9fe0"/><stop offset="1" stop-color="#1a6fbd"/></radialGradient></defs><path d="M8.3 2.2c3.3 0 5.9 2.6 5.9 6.1 0 .4 0 .7-.1 1H5.900c.2 1.500 1.300 2.400 2.800 2.400 1.100 0 1.900-.4 2.500-1.200h2.700c-.9 2.300-2.900 3.700-5.500 3.700-3.400 0-6-2.600-6-6s2.600-6 5.900-6zm0 2.500c-1.300 0-2.200.8-2.400 2.100h4.900c-.200-1.300-1.200-2.100-2.500-2.100z" fill="url(#iegd)"/><path d="M1.300 14.600c-1.300-1.600.200-5.600 3.600-8.900C8.200 2.400 12.200.7 14.100 1.300c.6.300.8.900.6 1.800-.300-.800-.9-1.100-1.900-.900-2 .4-4.800 2.200-7 4.700-2.400 2.700-3.700 5.500-3.100 6.900.2.500.6.700 1.200.700-1.100.6-2.100.600-2.600.100z" fill="#f5b400"/></svg>
<div style="position:absolute;left:211.5px;top:84px;font-size:12px;line-height:14px;white-space:pre;color:#000;letter-spacing:-0.253px;">CMSnet Home Page (2)</div>
<svg class="abs" style="left:343px;top:82px" width="17" height="17" viewBox="0 0 17 17"><path d="M4.500 .5h7.500l3.500 3.500v12h-11z" fill="#fdfdfd" stroke="#8c8c8c" stroke-width="1"/><path d="M12 .5v3.500h3.500" fill="#e4e4e4" stroke="#8c8c8c" stroke-width="1"/></svg><svg class="abs" style="left:342px;top:85px" width="13" height="13" viewBox="0 0 16 16"><defs><radialGradient id="iege" cx=".45" cy=".35" r=".75"><stop offset="0" stop-color="#7fd6fb"/><stop offset=".55" stop-color="#2f9fe0"/><stop offset="1" stop-color="#1a6fbd"/></radialGradient></defs><path d="M8.3 2.2c3.3 0 5.9 2.6 5.9 6.1 0 .4 0 .7-.1 1H5.900c.2 1.500 1.300 2.400 2.800 2.400 1.100 0 1.900-.4 2.500-1.200h2.700c-.9 2.300-2.900 3.700-5.500 3.700-3.400 0-6-2.600-6-6s2.600-6 5.900-6zm0 2.500c-1.300 0-2.200.8-2.400 2.100h4.900c-.200-1.300-1.200-2.100-2.500-2.100z" fill="url(#iege)"/><path d="M1.300 14.600c-1.300-1.600.200-5.600 3.600-8.900C8.200 2.400 12.200.7 14.100 1.300c.6.300.8.900.6 1.800-.300-.800-.9-1.100-1.900-.900-2 .4-4.800 2.200-7 4.700-2.400 2.700-3.700 5.500-3.100 6.900.2.500.6.700 1.200.700-1.100.6-2.100.600-2.600.100z" fill="#f5b400"/></svg>
<div style="position:absolute;left:363.5px;top:84px;font-size:12px;line-height:14px;white-space:pre;color:#000;letter-spacing:-0.222px;">CMSnet Home Page</div>
<svg class="abs" style="left:479px;top:82px" width="17" height="17" viewBox="0 0 17 17"><path d="M4.500 .5h7.500l3.500 3.500v12h-11z" fill="#fdfdfd" stroke="#8c8c8c" stroke-width="1"/><path d="M12 .5v3.500h3.500" fill="#e4e4e4" stroke="#8c8c8c" stroke-width="1"/></svg><svg class="abs" style="left:478px;top:85px" width="13" height="13" viewBox="0 0 16 16"><defs><radialGradient id="iegf" cx=".45" cy=".35" r=".75"><stop offset="0" stop-color="#7fd6fb"/><stop offset=".55" stop-color="#2f9fe0"/><stop offset="1" stop-color="#1a6fbd"/></radialGradient></defs><path d="M8.3 2.2c3.3 0 5.9 2.6 5.9 6.1 0 .4 0 .7-.1 1H5.900c.2 1.500 1.300 2.400 2.800 2.400 1.100 0 1.900-.4 2.500-1.200h2.700c-.9 2.300-2.900 3.700-5.500 3.700-3.400 0-6-2.600-6-6s2.600-6 5.900-6zm0 2.500c-1.300 0-2.200.8-2.400 2.100h4.900c-.200-1.300-1.200-2.100-2.500-2.100z" fill="url(#iegf)"/><path d="M1.300 14.600c-1.300-1.600.200-5.600 3.600-8.900C8.200 2.400 12.200.7 14.100 1.300c.6.300.8.900.6 1.800-.300-.800-.9-1.100-1.900-.900-2 .4-4.800 2.200-7 4.700-2.400 2.700-3.700 5.500-3.100 6.900.2.500.6.700 1.200.700-1.100.6-2.100.600-2.600.100z" fill="#f5b400"/></svg>
<div style="position:absolute;left:498px;top:84px;font-size:12px;line-height:14px;white-space:pre;color:#000;letter-spacing:-0.124px;">Internet Explorer cannot d...</div>
<div class="abs" style="left:0;top:1056px;width:1920px;height:24px;background:#fff"></div>
<div class="abs" style="left:0;top:1056px;width:1920px;height:1px;background:#8e8e8e"></div>
<div class="abs" style="left:1px;top:1058px;width:1919px;height:20px;background:#efebeb"></div>
<svg class="abs" style="left:1830px;top:1060px" width="14" height="15" viewBox="0 0 14 15"><path d="M8 9l4.500 4.500" stroke="#9a5a1e" stroke-width="2.200" stroke-linecap="round"/><circle cx="5.500" cy="5.500" r="4.500" fill="#e8f2fb" stroke="#8a9bb0" stroke-width="1"/><path d="M5.500 2.800v5.400M2.800 5.500h5.400" stroke="#1d5fc4" stroke-width="1.800"/></svg>
<div style="position:absolute;left:1845.5px;top:1061px;font-size:12px;line-height:14px;white-space:pre;color:#000;letter-spacing:-0.548px;">100%</div>
<svg class="abs" style="left:1890px;top:1066px" width="8" height="5" viewBox="0 0 8 5"><path d="M0 0h8L4 4.500z" fill="#222"/></svg>
<div class="abs" style="left:1914px;top:1068px;width:2px;height:2px;background:#c6c2c2"></div>
<div class="abs" style="left:1911px;top:1071px;width:2px;height:2px;background:#c6c2c2"></div>
<div class="abs" style="left:1914px;top:1071px;width:2px;height:2px;background:#c6c2c2"></div>
<div class="abs" style="left:1908px;top:1074px;width:2px;height:2px;background:#c6c2c2"></div>
<div class="abs" style="left:1911px;top:1074px;width:2px;height:2px;background:#c6c2c2"></div>
<div class="abs" style="left:1914px;top:1074px;width:2px;height:2px;background:#c6c2c2"></div>
</body></html>
